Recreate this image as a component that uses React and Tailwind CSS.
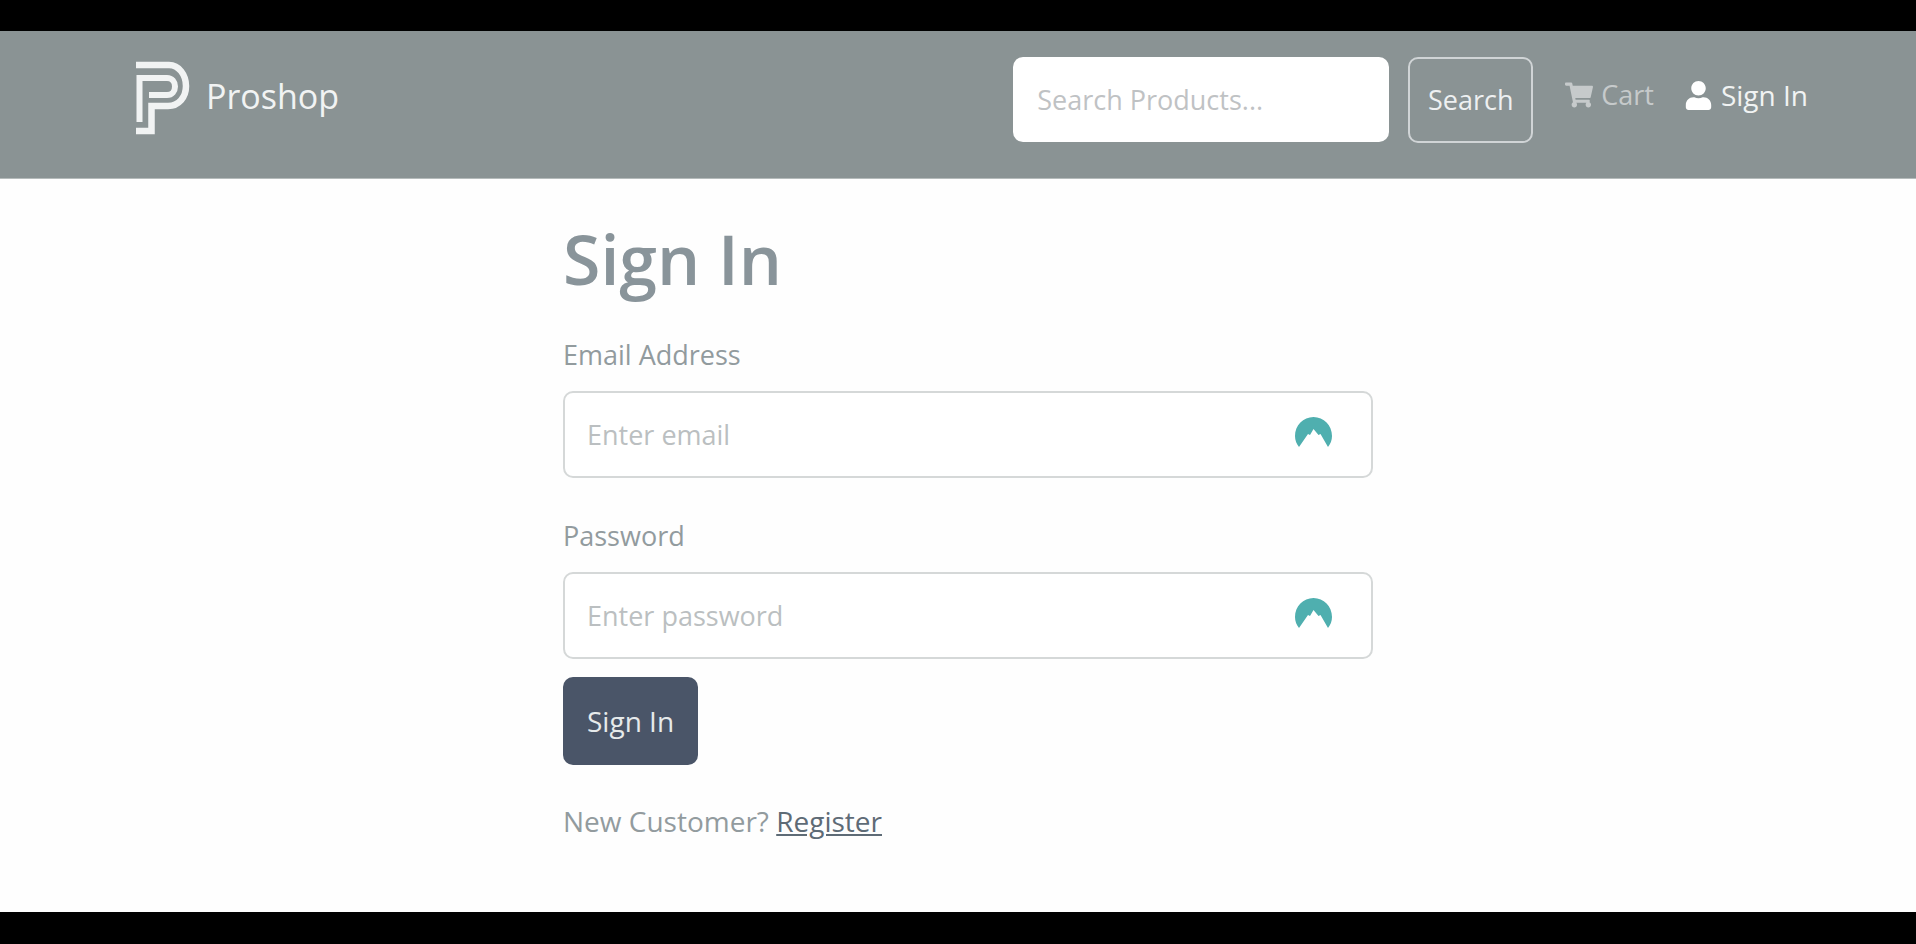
import { FaShoppingCart, FaUser } from "react-icons/fa";

const Logo = () => (
  <svg width="54" height="74" viewBox="0 0 54 74" fill="none" stroke="currentColor" aria-hidden="true">
    <path d="M0 4H33C43 4 50 14 50 25C50 36 43 45 32 45H15.500V70H0" strokeWidth="6.500" />
    <path d="M3.500 61V17H31C36 17 39 21 39 25.500C39 30 36 34 31 34H13" strokeWidth="6" />
  </svg>
);

const MountainBadge = () => (
  <svg
    className="pointer-events-none absolute right-[41px] top-[26px]"
    width="37"
    height="30"
    viewBox="0 0 37 30"
    fill="#4fafaf"
    aria-hidden="true"
  >
    <path d="M4 30C1.500 27 0 23 0 19C0 8.500 8.300 0 18.500 0S37 8.500 37 19C37 23 35.500 27 33 30L25.500 17L23.500 18L18.500 12L15 18L13 17Z" />
  </svg>
);

const Field = ({ id, label, type, placeholder }) => (
  <div>
    <label htmlFor={id} className="mb-4 block leading-10">
      {label}
    </label>
    <div className="relative">
      <input
        id={id}
        type={type}
        placeholder={placeholder}
        className="block h-[87px] w-full rounded-[10px] border-2 border-[#d5d8d8] bg-white px-[22px] placeholder:text-[#bbbfc1]"
      />
      <MountainBadge />
    </div>
  </div>
);

const Header = () => (
  <header className="border-b border-[#b5bbbb] bg-[#8a9394] pl-5 text-white">
    <div className="mx-auto flex h-[147px] max-w-[1720px] items-start justify-between pl-7 pr-5 pt-[26px]">
      <a href="#" className="mt-1 flex items-center gap-4 text-[34px] text-[#f1f3f3]">
        <Logo />
        <span className="-mt-1">Proshop</span>
      </a>

      <div className="flex items-start">
        <form className="flex gap-[19px]">
          <input
            type="search"
            aria-label="Search Products"
            placeholder="Search Products..."
            className="h-[85px] w-[376px] rounded-[10px] bg-white px-6 placeholder:text-[#bfc2c4]"
          />
          <button
            type="button"
            className="h-[86px] w-[125px] rounded-[10px] border-2 border-[#d0d4d6] text-[#eef0f1]"
          >
            Search
          </button>
        </form>
        <nav className="mt-[18px] flex items-center gap-[30px] pl-8 leading-10">
          <a href="#" className="flex items-center gap-2 text-[#c6cacb]">
            <FaShoppingCart size={28} />
            Cart
          </a>
          <a href="#" className="flex items-center gap-2 text-[28px] text-[#f1f3f3]">
            <FaUser size={29} className="text-white" />
            Sign In
          </a>
        </nav>
      </div>
    </div>
  </header>
);

export default function App() {
  return (
    <div className="flex min-h-screen flex-col border-b-[32px] border-t-[31px] border-black bg-[#fefefe] font-['Open_Sans','Noto_Sans',sans-serif] text-[27px] text-[#929b9e]">
      <Header />
      <main className="flex-1 pl-5">
        <div className="mx-auto max-w-[810px] pt-10">
          <h1 className="mb-9 text-[68px] font-semibold leading-20 text-[#89949a]">Sign In</h1>
          <form>
            <div className="flex flex-col gap-[38px]">
              <Field id="email" label="Email Address" type="email" placeholder="Enter email" />
              <Field id="password" label="Password" type="password" placeholder="Enter password" />
            </div>
            <button
              type="button"
              className="mt-[18px] h-[88px] rounded-[10px] bg-[#4a5568] px-6 text-[28px] text-[#e6eaeb]"
            >
              Sign In
            </button>
          </form>
          <p className="mt-9 text-[28px] leading-10">
            New Customer?{" "}
            <a href="#" className="text-[#5e6b76] underline">
              Register
            </a>
          </p>
        </div>
      </main>
    </div>
  );
}
